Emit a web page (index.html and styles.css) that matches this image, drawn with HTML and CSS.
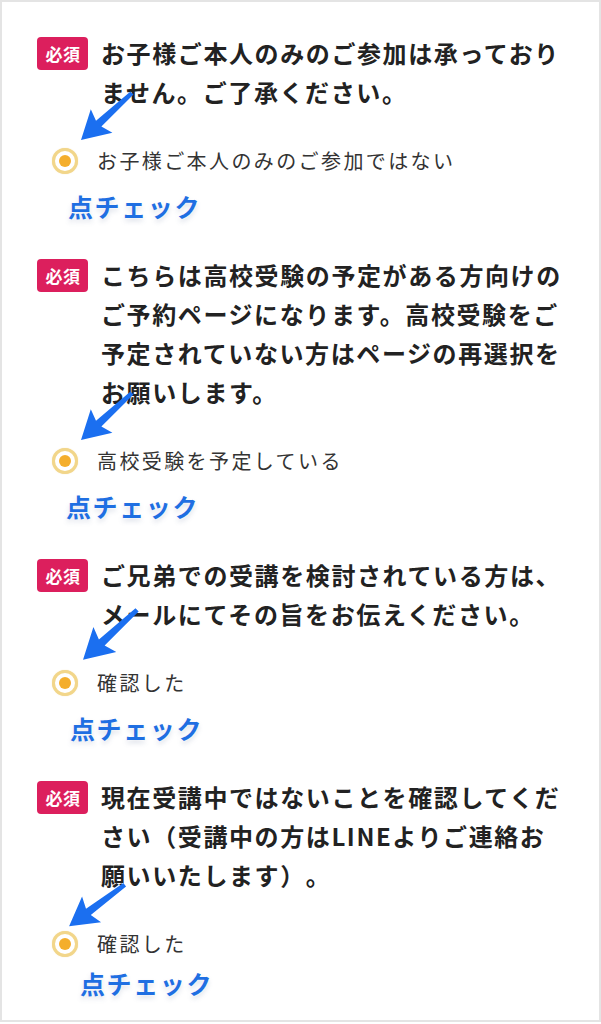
FILE: index.html
```html
<!DOCTYPE html>
<html lang="ja">
<head>
<meta charset="utf-8">
<title>必須確認</title>
<link rel="stylesheet" href="styles.css">
</head>
<body>
<div class="frame">

  <section class="item">
    <div class="q">
      <span class="badge">必須</span>
      <p class="title">お子様ご本人のみのご参加は承っておりません。ご了承ください。</p>
    </div>
    <div class="opt">
      <svg class="arrow" viewBox="0 0 80 80" width="80" height="80"><polygon points="66.5,10.4 69.5,13.6 37.4,45.6 48.4,51.8 17,59 26.8,28.2 32,39.8"/></svg>
      <span class="radio"><span class="dot"></span></span>
      <span class="label">お子様ご本人のみのご参加ではない</span>
    </div>
    <div class="check c1">点チェック</div>
  </section>

  <section class="item">
    <div class="q">
      <span class="badge">必須</span>
      <p class="title">こちらは高校受験の予定がある方向けのご予約ページになります。高校受験をご予定されていない方はページの再選択をお願いします。</p>
    </div>
    <div class="opt">
      <svg class="arrow" viewBox="0 0 80 80" width="80" height="80"><polygon points="66.5,10.4 69.5,13.6 37.4,45.6 48.4,51.8 17,59 26.8,28.2 32,39.8"/></svg>
      <span class="radio"><span class="dot"></span></span>
      <span class="label">高校受験を予定している</span>
    </div>
    <div class="check c2">点チェック</div>
  </section>

  <section class="item">
    <div class="q">
      <span class="badge">必須</span>
      <p class="title">ご兄弟での受講を検討されている方は、メールにてその旨をお伝えください。</p>
    </div>
    <div class="opt">
      <svg class="arrow a3" viewBox="0 0 80 80" width="80" height="80"><polygon points="66.5,10.4 69.5,13.6 37.4,45.6 48.4,51.8 17,59 26.8,28.2 32,39.8"/></svg>
      <span class="radio"><span class="dot"></span></span>
      <span class="label">確認した</span>
    </div>
    <div class="check c3">点チェック</div>
  </section>

  <section class="item">
    <div class="q">
      <span class="badge">必須</span>
      <p class="title">現在受講中ではないことを確認してください（受講中の方はLINEよりご連絡お願いいたします）。</p>
    </div>
    <div class="opt">
      <svg class="arrow a4" viewBox="0 0 80 80" width="80" height="80"><polygon points="66.5,10.4 69.5,13.6 37.4,45.6 48.4,51.8 17,59 26.8,28.2 32,39.8"/></svg>
      <span class="radio"><span class="dot"></span></span>
      <span class="label">確認した</span>
    </div>
    <div class="check c4">点チェック</div>
  </section>

</div>
</body>
</html>
```

FILE: styles.css
```css
* { box-sizing: border-box; }

html, body {
  margin: 0;
  padding: 0;
  background: #ffffff;
}

body {
  font-family: "Noto Sans CJK JP", "Noto Sans", sans-serif;
  color: #222;
  text-spacing-trim: space-all;
}

.frame {
  width: 601px;
  height: 1022px;
  border: 2px solid #e4e4e4;
  padding: 30.5px 0 0 35px;
}

.item + .item {
  margin-top: 34px;
}

.q {
  display: flex;
  align-items: flex-start;
  gap: 13px;
}

.badge {
  flex: none;
  width: 51px;
  height: 33px;
  margin-top: 4.5px;
  background: #dc1f5d;
  color: #fff;
  border-radius: 4px;
  font-size: 17px;
  font-weight: 700;
  letter-spacing: 0.5px;
  display: flex;
  align-items: center;
  justify-content: center;
  padding-left: 1px;
}

.title {
  margin: 0;
  width: 468px;
  font-size: 24px;
  line-height: 39px;
  font-weight: 700;
  letter-spacing: 1.6px;
  color: #222;
}

.opt {
  position: relative;
  display: flex;
  align-items: center;
  height: 28px;
  margin: 36px 0 0 15px;
}

.radio {
  flex: none;
  width: 26px;
  height: 26px;
  border-radius: 50%;
  border: 3.5px solid #f2d68a;
  background: #fff;
  display: flex;
  align-items: center;
  justify-content: center;
  box-shadow: 0 0 1px rgba(230, 190, 90, 0.6);
}

.dot {
  width: 12px;
  height: 12px;
  border-radius: 50%;
  background: #f4ae2c;
}

.label {
  margin-left: 19px;
  font-size: 20px;
  line-height: 28px;
  letter-spacing: 2.4px;
  color: #333;
}

.arrow {
  position: absolute;
  left: 12px;
  top: -66px;
  fill: #1b6ff0;
}

.arrow.a3 {
  left: 13px;
  top: -67px;
  transform: scale(1.06);
  transform-origin: 0 100%;
}

.arrow.a4 {
  left: 0px;
  top: -63px;
  transform: rotate(6deg);
  transform-origin: 15px 60px;
}

.check {
  margin-top: 16px;
  font-size: 25px;
  line-height: 30px;
  font-weight: 700;
  letter-spacing: 1.6px;
  color: #1f6fe2;
  text-shadow: 0 0 2px #fff, 0 3px 5px rgba(90, 110, 150, 0.22);
}

.c1 { margin-left: 31px; }
.c2 { margin-left: 29px; }
.c3 { margin-left: 33px; }
.c4 { margin-left: 43px; margin-top: 10px; }
```
